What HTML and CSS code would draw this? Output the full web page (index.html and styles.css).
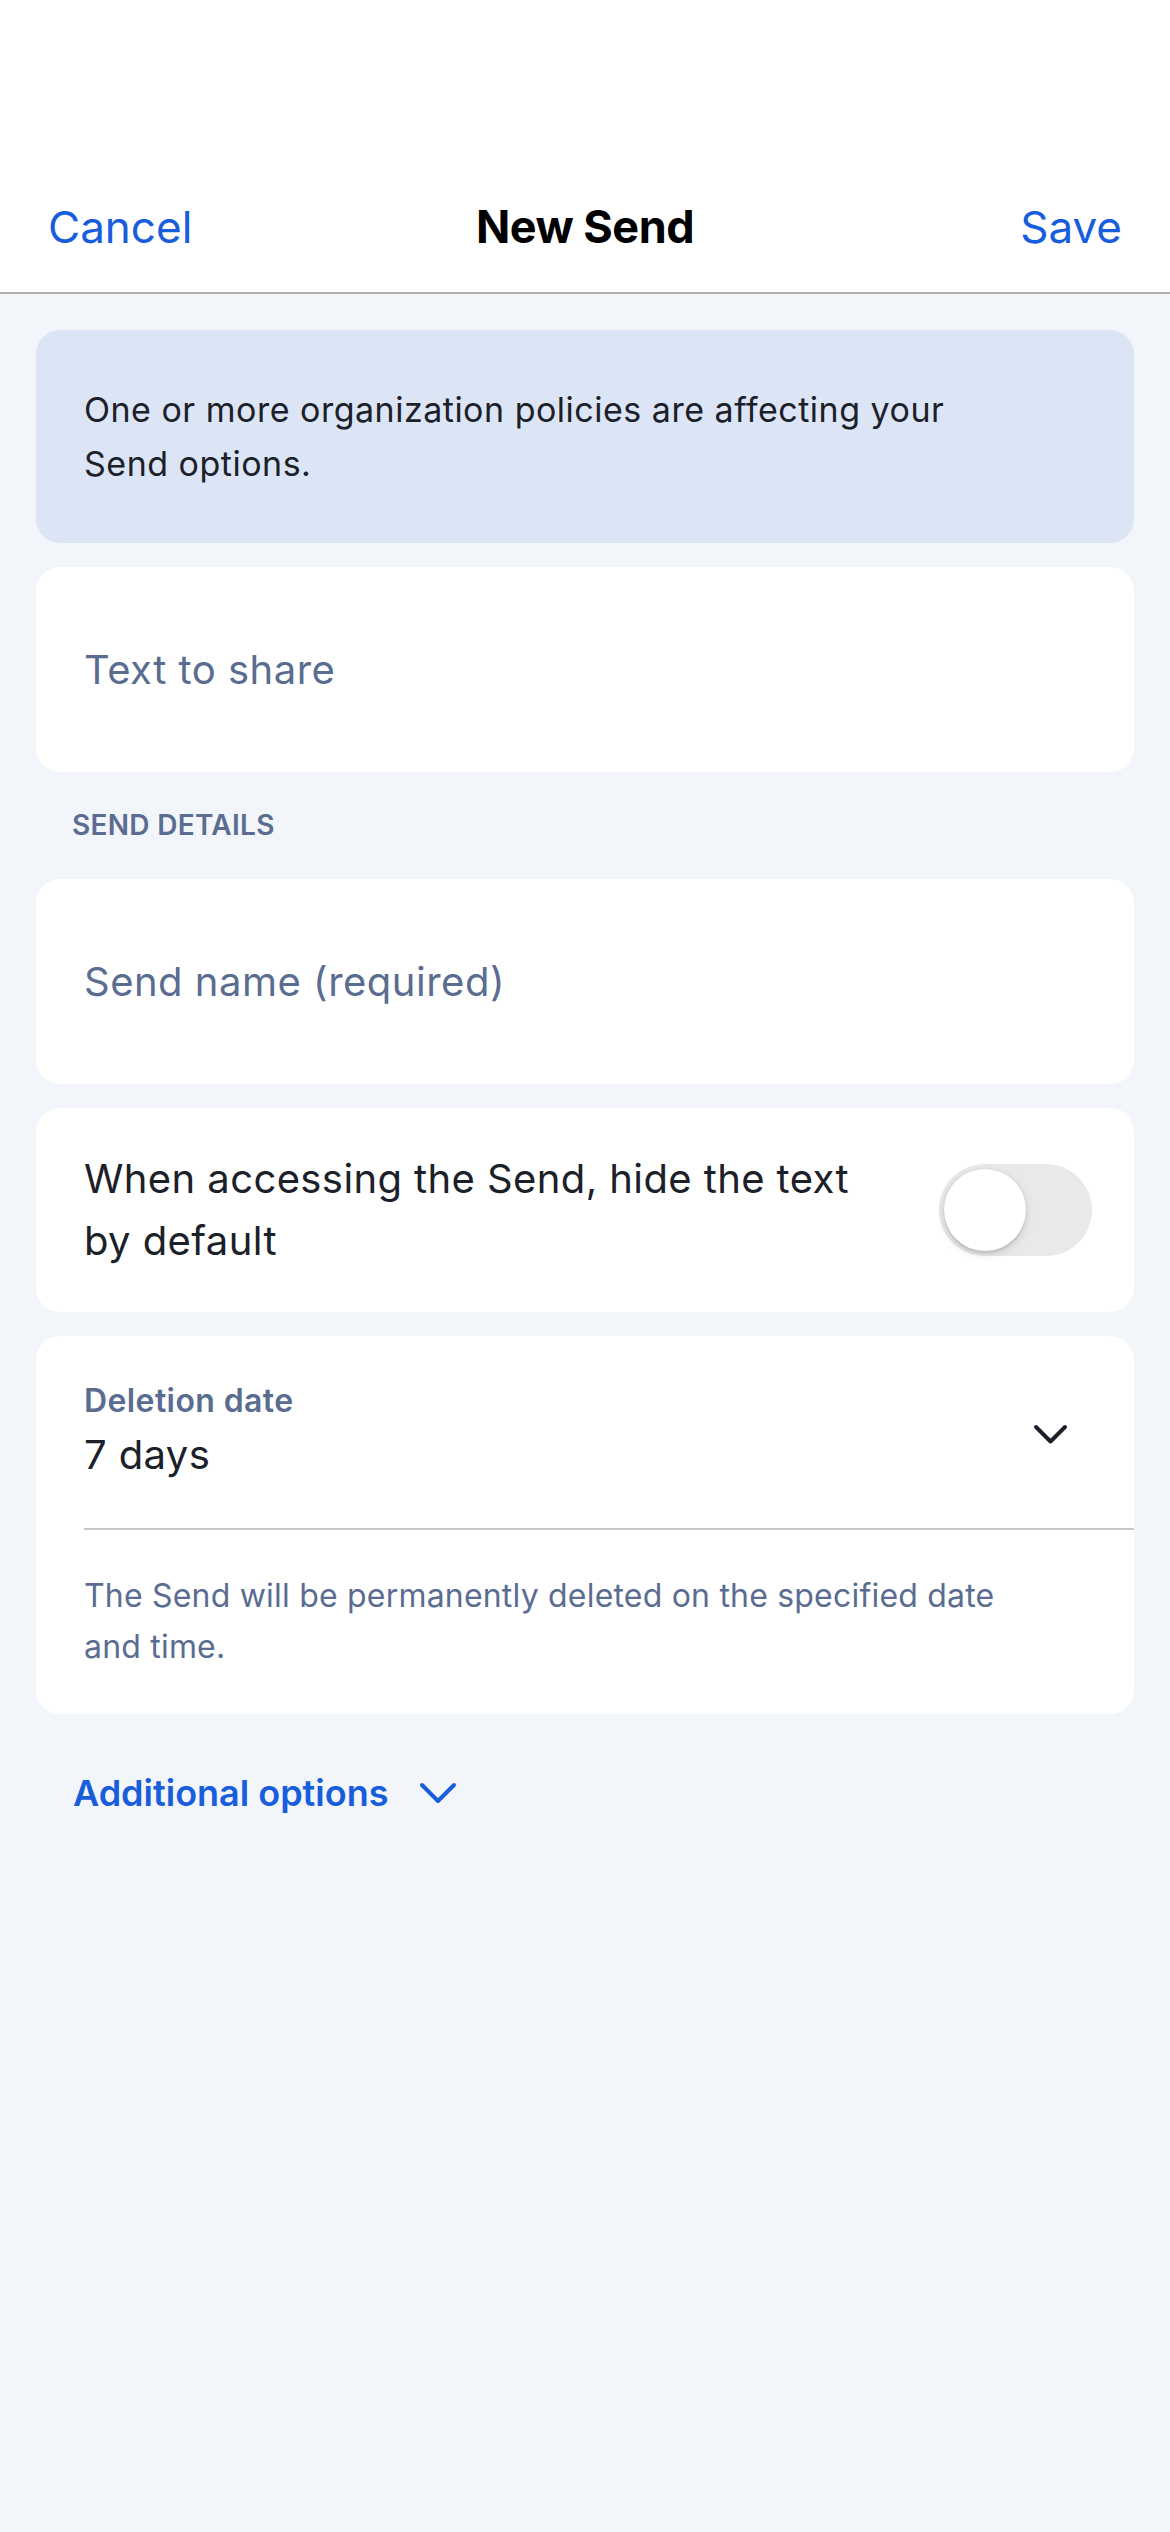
FILE: index.html
```html
<!DOCTYPE html>
<html lang="en">
<head>
<meta charset="utf-8">
<title>New Send</title>
<link rel="stylesheet" href="styles.css">
</head>
<body>
<div class="screen">
  <header class="topbar">
    <div class="statusbar"></div>
    <nav class="navbar">
      <span class="nav-btn nav-left">Cancel</span>
      <span class="nav-title">New Send</span>
      <span class="nav-btn nav-right">Save</span>
    </nav>
  </header>
  <main class="content">
    <div class="info-card">
      <p class="info-text">One or more organization policies are affecting your Send options.</p>
    </div>
    <div class="card field"><span class="placeholder">Text to share</span></div>
    <h2 class="section-label">SEND DETAILS</h2>
    <div class="card field"><span class="placeholder">Send name (required)</span></div>
    <div class="card toggle-row">
      <span class="toggle-text">When accessing the Send, hide the text by default</span>
      <span class="switch"><span class="knob"></span></span>
    </div>
    <div class="card select-card">
      <div class="select-row">
        <div class="select-text">
          <div class="select-label">Deletion date</div>
          <div class="select-value">7 days</div>
        </div>
        <svg class="chev-dark" width="37" height="23" viewBox="0 0 37 23"><path d="M4 4 L18.5 18.5 L33 4" fill="none" stroke="#1b2029" stroke-width="4" stroke-linecap="round" stroke-linejoin="round"/></svg>
      </div>
      <div class="divider"></div>
      <p class="helper">The Send will be permanently deleted on the specified date and time.</p>
    </div>
    <div class="more">
      <span class="more-text">Additional options</span>
      <svg class="chev-blue" width="40" height="24" viewBox="0 0 40 24"><path d="M4 4 L20 20 L36 4" fill="none" stroke="#175ddc" stroke-width="4" stroke-linecap="round" stroke-linejoin="round"/></svg>
    </div>
  </main>
</div>
</body>
</html>
```

FILE: styles.css
```css
* { box-sizing: border-box; }
html, body { margin: 0; padding: 0; }
body {
  background: #f2f5f9;
  font-family: Inter, "Noto Sans", "Liberation Sans", sans-serif;
  color: #1b2029;
}
.screen { min-height: 2532px; background: #f2f5f9; }

.topbar {
  background: #ffffff;
  border-bottom: 2px solid #b0b0b0;
}
.statusbar { height: 162px; }
.navbar {
  height: 130px;
  display: grid;
  grid-template-columns: 1fr auto 1fr;
  align-items: center;
  padding: 0 48px 0 48px;
}
.nav-btn {
  font-size: 44px;
  color: #175ddc;
  line-height: 1.2;
}
.nav-left { justify-self: start; }
.nav-right { justify-self: end; }
.nav-title {
  font-size: 45px;
  font-weight: 700;
  color: #000;
  letter-spacing: -0.5px;
  line-height: 1.2;
}

.content {
  padding: 36px 36px 0;
  display: flex;
  flex-direction: column;
}

.info-card {
  background: #dbe5f6;
  border-radius: 24px;
  padding: 53px 120px 52px 48px;
}
.info-text {
  margin: 0;
  font-size: 34px;
  line-height: 54px;
  letter-spacing: 0.5px;
  color: #1b2029;
}

.card {
  background: #ffffff;
  border-radius: 24px;
  margin-top: 24px;
}
.field {
  height: 205px;
  display: flex;
  align-items: center;
  padding: 0 48px;
}
.placeholder {
  font-size: 40px;
  line-height: 1.2;
  letter-spacing: 0.5px;
  color: #5a6d91;
}

.section-label {
  margin: 36px 0 13px 36px;
  font-size: 28px;
  line-height: 34px;
  font-weight: 600;
  letter-spacing: 0.3px;
  color: #5a6d91;
}
.section-label + .card { margin-top: 24px; }

.toggle-row {
  height: 204px;
  display: flex;
  align-items: center;
  justify-content: space-between;
  padding: 0 42px 0 48px;
}
.toggle-text {
  font-size: 40px;
  line-height: 62px;
  letter-spacing: 0.4px;
  color: #1b2029;
  max-width: 790px;
}
.switch {
  width: 153px;
  height: 92px;
  border-radius: 46px;
  background: #e9e9ea;
  padding: 5px;
  display: flex;
  align-items: center;
  flex-shrink: 0;
}
.knob {
  width: 82px;
  height: 82px;
  border-radius: 50%;
  background: #ffffff;
  box-shadow: 0 3px 8px rgba(0,0,0,0.15), 0 3px 1px rgba(0,0,0,0.06), 0 0 0 1px rgba(0,0,0,0.03);
}

.select-card {
  padding: 45px 0 42px 48px;
}
.select-row {
  display: flex;
  align-items: center;
  justify-content: space-between;
  padding-right: 65px;
  padding-bottom: 49px;
}
.select-label {
  font-size: 32px;
  line-height: 40px;
  font-weight: 600;
  letter-spacing: 0.4px;
  color: #5a6d91;
}
.select-value {
  margin-top: 10px;
  font-size: 40px;
  line-height: 48px;
  letter-spacing: 0.4px;
  color: #1b2029;
}
.chev-dark { display: block; margin-top: 8px; }
.divider {
  height: 2px;
  background: #c8c8cb;
}
.helper {
  margin: 40px 0 0;
  padding-right: 120px;
  font-size: 32px;
  line-height: 51px;
  letter-spacing: 0.2px;
  color: #5a6d91;
}

.more {
  margin-top: 57px;
  padding-left: 37px;
  display: flex;
  align-items: center;
  gap: 30px;
}
.more-text {
  font-size: 36px;
  line-height: 44px;
  font-weight: 600;
  color: #175ddc;
}
.chev-blue { display: block; }
```
